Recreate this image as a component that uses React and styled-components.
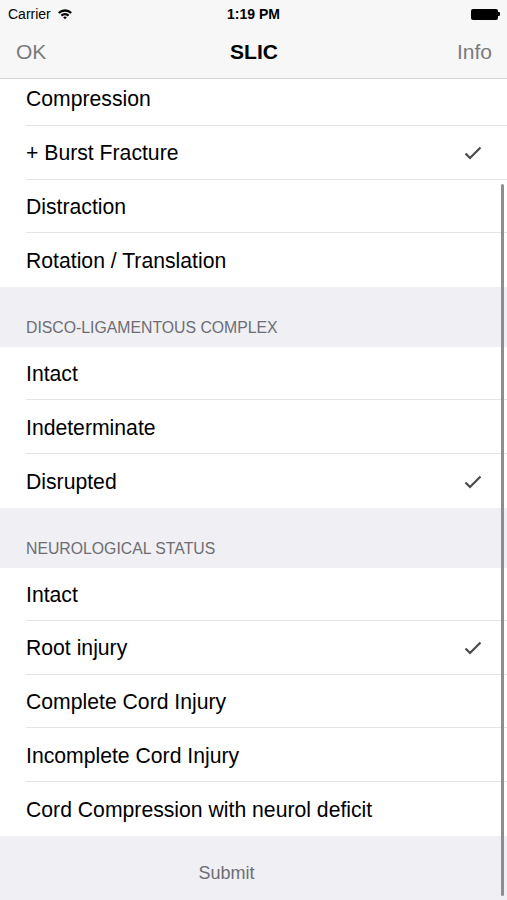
import React from 'react';
import styled, { createGlobalStyle } from 'styled-components';

const GlobalStyle = createGlobalStyle`
    html, body {
        margin: 0;
        padding: 0;
        background: #efeff4;
    }
    * {
        box-sizing: border-box;
    }
`;

const Screen = styled.div`
    position: relative;
    width: 507px;
    height: 900px;
    overflow: hidden;
    display: flex;
    flex-direction: column;
    background: #efeff4;
    font-family: "Liberation Sans", Arial, sans-serif;
    color: #000;
`;

const Header = styled.div`
    background: #f7f7f7;
    border-bottom: 1px solid #d6d6d6;
    flex-shrink: 0;
`;

const StatusBar = styled.div`
    height: 28px;
    display: grid;
    grid-template-columns: 1fr auto 1fr;
    align-items: center;
    padding: 0 8px;
    font-size: 14px;
`;

const Carrier = styled.div`
    display: flex;
    align-items: center;
    gap: 6px;
`;

const Time = styled.div`
    font-weight: bold;
`;

const Battery = styled.div`
    justify-self: end;
    display: flex;
    align-items: center;
    margin-right: -1px;

    &::before {
        content: '';
        width: 27px;
        height: 11px;
        border-radius: 2px;
        background: #000;
    }
    &::after {
        content: '';
        width: 2px;
        height: 4px;
        background: #000;
        border-radius: 0 1px 1px 0;
    }
`;

const NavBar = styled.div`
    height: 50px;
    display: grid;
    grid-template-columns: 1fr auto 1fr;
    align-items: center;
    padding: 0 15px 2px 16px;
    font-size: 21px;
`;

const NavButton = styled.div`
    color: #7b7b7b;
    justify-self: ${p => (p.$right ? 'end' : 'start')};
`;

const Title = styled.div`
    font-weight: bold;
`;

const Content = styled.div`
    flex: 1;
    display: flex;
    flex-direction: column;
`;

const Group = styled.div`
    background: #fff;
`;

const Row = styled.div`
    height: ${p => p.$height || 53.6}px;
    display: flex;
    align-items: center;
    justify-content: space-between;
    padding: ${p => (p.$shift ? 0 : 2)}px 25px ${p => p.$shift || 0}px 0;
    margin-left: 26px;
    font-size: 21.2px;
    border-bottom: ${p => (p.$last ? 'none' : '1px solid #e4e4e6')};
`;

const SectionHeader = styled.div`
    height: 60px;
    display: flex;
    align-items: flex-end;
    padding: 0 0 10px 26px;
    font-size: 15.8px;
    color: #6d6d72;
`;

const Footer = styled.div`
    flex: 1;
    display: flex;
    align-items: center;
    justify-content: center;
    padding-right: 54px;
    padding-top: 12px;
    font-size: 18px;
    color: #6d6d72;
`;

const ScrollIndicator = styled.div`
    position: absolute;
    right: 3px;
    top: 184px;
    bottom: 4px;
    width: 3.5px;
    border-radius: 2px;
    background: #8e8e8e;
`;

const Wifi = () => (
    <svg width="16" height="12" viewBox="0 0 16 12">
        <path d="M1 4.2 A10 10 0 0 1 15 4.2 L13.4 5.8 A7.8 7.8 0 0 0 2.6 5.8 Z" fill="#000" />
        <path d="M3.6 6.8 A6.4 6.4 0 0 1 12.4 6.8 L10.8 8.4 A4.2 4.2 0 0 0 5.2 8.4 Z" fill="#000" />
        <path d="M6.2 9.4 A2.6 2.6 0 0 1 9.8 9.4 L8 11.3 Z" fill="#000" />
    </svg>
);

const Check = () => (
    <svg width="18" height="14" viewBox="0 0 18 14">
        <path d="M1.5 7.5 L6 12 L16.5 1.5" fill="none" stroke="#4a4a4a" strokeWidth="2.2" />
    </svg>
);

const sections = [
    {
        rows: [
            { label: 'Compression', height: 47, shift: 7 },
            { label: '+ Burst Fracture', checked: true },
            { label: 'Distraction' },
            { label: 'Rotation / Translation' },
        ],
    },
    {
        title: 'DISCO-LIGAMENTOUS COMPLEX',
        rows: [
            { label: 'Intact' },
            { label: 'Indeterminate' },
            { label: 'Disrupted', checked: true },
        ],
    },
    {
        title: 'NEUROLOGICAL STATUS',
        rows: [
            { label: 'Intact' },
            { label: 'Root injury', checked: true },
            { label: 'Complete Cord Injury' },
            { label: 'Incomplete Cord Injury' },
            { label: 'Cord Compression with neurol deficit' },
        ],
    },
];

const App = () => {
    return (
        <Screen>
            <GlobalStyle />
            <Header>
                <StatusBar>
                    <Carrier>
                        Carrier <Wifi />
                    </Carrier>
                    <Time>1:19 PM</Time>
                    <Battery />
                </StatusBar>
                <NavBar>
                    <NavButton>OK</NavButton>
                    <Title>SLIC</Title>
                    <NavButton $right>Info</NavButton>
                </NavBar>
            </Header>
            <Content>
                {sections.map((section, i) => (
                    <React.Fragment key={i}>
                        {section.title && <SectionHeader>{section.title}</SectionHeader>}
                        <Group>
                            {section.rows.map((row, j) => (
                                <Row
                                    key={row.label}
                                    $height={row.height}
                                    $shift={row.shift}
                                    $last={j === section.rows.length - 1}
                                >
                                    <span>{row.label}</span>
                                    {row.checked && <Check />}
                                </Row>
                            ))}
                        </Group>
                    </React.Fragment>
                ))}
                <Footer>Submit</Footer>
            </Content>
            <ScrollIndicator />
        </Screen>
    );
};

export default App;
